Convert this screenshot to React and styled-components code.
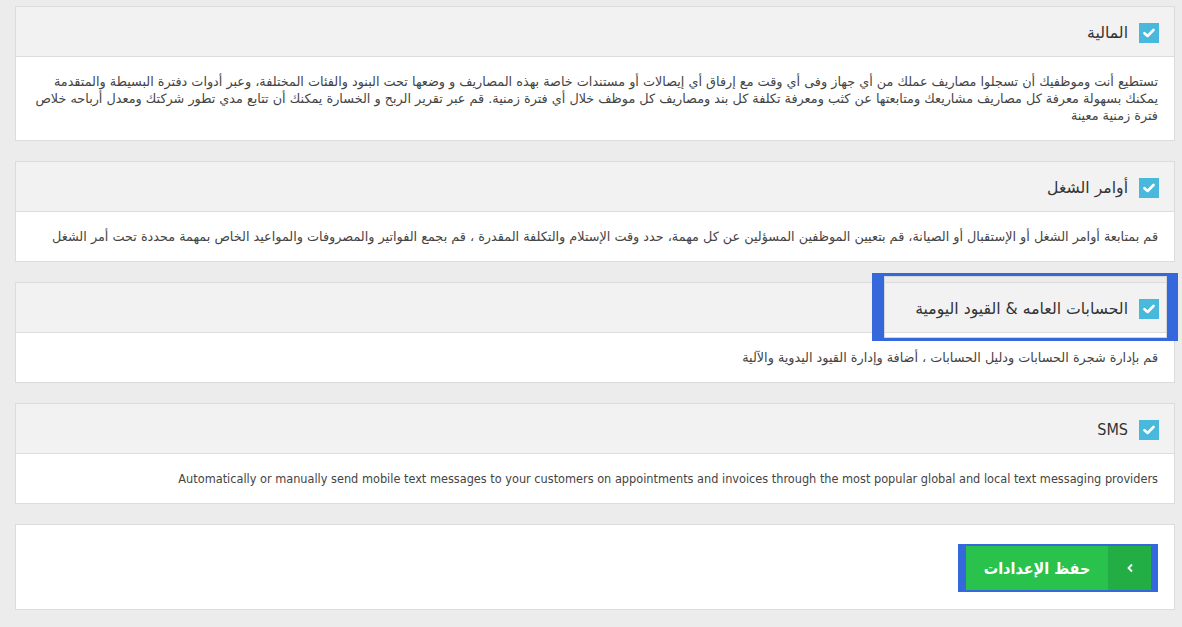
import React from "react";
import styled, { createGlobalStyle } from "styled-components";

const Global = createGlobalStyle`
  html, body { margin: 0; padding: 0; background: #ececec; }
  body { font-family: "DejaVu Sans", sans-serif; }
`;

const Page = styled.div`
  direction: rtl;
  padding: 6px 7px 20px 15px;
  display: flex;
  flex-direction: column;
  gap: 20px;
`;

const Panel = styled.section`
  position: relative;
  border: 1px solid #dcdcdc;
  background: #fff;
`;

const Header = styled.div`
  height: 50px;
  box-sizing: border-box;
  background: #f2f2f2;
  border-bottom: 1px solid #dcdcdc;
  display: flex;
  align-items: center;
  gap: 11px;
  padding: 2px 15px 0 15px;
`;

const Check = styled.span`
  width: 20px;
  height: 20px;
  background: #48b8dc;
  display: inline-flex;
  align-items: center;
  justify-content: center;
  flex: none;
`;

const Title = styled.h3`
  margin: 0;
  font-weight: normal;
  font-family: ${(p) =>
    p.$latin ? '"DejaVu Sans Condensed", "DejaVu Sans", sans-serif' : '"DejaVu Sans", sans-serif'};
  font-size: ${(p) => (p.$latin ? "16px" : "15.7px")};
  color: #333;
`;

const Body = styled.p`
  margin: 0;
  padding: 16px 16px;
  font-family: ${(p) =>
    p.$latin ? '"DejaVu Sans Condensed", "DejaVu Sans", sans-serif' : '"DejaVu Sans", sans-serif'};
  font-size: ${(p) => (p.$latin ? "12.6px" : "12.8px")};
  line-height: 17px;
  color: #444;
  text-align: right;
`;

const Highlight = styled.div`
  position: absolute;
  top: -10px;
  left: 856px;
  width: 306px;
  height: 68px;
  box-sizing: border-box;
  border-style: solid;
  border-color: #3468db;
  border-width: 3px 11px 3px 12px;
  box-shadow: inset 0 0 0 1px #d6d6d6;
  pointer-events: none;
`;

const Footer = styled.div`
  padding: 19px 16px 17px;
  display: flex;
  justify-content: flex-start;
`;

const Frame = styled.div`
  background: #3468db;
  padding: 2px 7px 2px 8px;
  display: flex;
`;

const SaveButton = styled.button`
  direction: rtl;
  display: flex;
  align-items: stretch;
  height: 44px;
  padding: 0;
  border: none;
  background: #29c24d;
  color: #fff;
  cursor: pointer;
  font-family: "DejaVu Sans Condensed", "DejaVu Sans", sans-serif;
`;

const ArrowPart = styled.span`
  width: 43px;
  background: #23ad45;
  display: flex;
  align-items: center;
  justify-content: center;
`;

const LabelPart = styled.span`
  width: 142px;
  display: flex;
  align-items: center;
  justify-content: center;
  font-size: 16px;
  font-weight: bold;
`;

const CheckIcon = () => (
  <svg width="12" height="10" viewBox="0 0 12 10">
    <path d="M1.5 5.2 L4.6 8 L10.5 2" fill="none" stroke="#fff" strokeWidth="2.6" strokeLinecap="round" strokeLinejoin="round" />
  </svg>
);

const Chevron = () => (
  <svg width="8" height="10" viewBox="0 0 8 10">
    <path d="M6 1.5 L2.5 5 L6 8.5" fill="none" stroke="#fff" strokeWidth="1.8" />
  </svg>
);

const modules = [
  {
    title: "المالية",
    body:
      "تستطيع أنت وموظفيك أن تسجلوا مصاريف عملك من أي جهاز وفى أي وقت مع إرفاق أي إيصالات أو مستندات خاصة بهذه المصاريف و وضعها تحت البنود والفئات المختلفة، وعبر أدوات دفترة البسيطة والمتقدمة يمكنك بسهولة معرفة كل مصاريف مشاريعك ومتابعتها عن كثب ومعرفة تكلفة كل بند ومصاريف كل موظف خلال أي فترة زمنية. قم عبر تقرير الربح و الخسارة يمكنك أن تتابع مدي تطور شركتك ومعدل أرباحه خلاص فترة زمنية معينة",
  },
  {
    title: "أوامر الشغل",
    body:
      "قم بمتابعة أوامر الشغل أو الإستقبال أو الصيانة، قم بتعيين الموظفين المسؤلين عن كل مهمة، حدد وقت الإستلام والتكلفة المقدرة ، قم بجمع الفواتير والمصروفات والمواعيد الخاص بمهمة محددة تحت أمر الشغل",
  },
  {
    title: "الحسابات العامه & القيود اليومية",
    body: "قم بإدارة شجرة الحسابات ودليل الحسابات ، أضافة وإدارة القيود اليدوية والآلية",
    highlight: true,
  },
  {
    title: "SMS",
    latin: true,
    body:
      "Automatically or manually send mobile text messages to your customers on appointments and invoices through the most popular global and local text messaging providers",
  },
];

export default function App() {
  return (
    <>
      <Global />
      <Page>
        {modules.map((m) => (
          <Panel key={m.title}>
            <Header>
              <Check>
                <CheckIcon />
              </Check>
              <Title $latin={m.latin}>{m.title}</Title>
            </Header>
            <Body $latin={m.latin}>{m.body}</Body>
            {m.highlight && <Highlight />}
          </Panel>
        ))}
        <Panel>
          <Footer>
            <Frame>
              <SaveButton>
                <ArrowPart>
                  <Chevron />
                </ArrowPart>
                <LabelPart>حفظ الإعدادات</LabelPart>
              </SaveButton>
            </Frame>
          </Footer>
        </Panel>
      </Page>
    </>
  );
}
